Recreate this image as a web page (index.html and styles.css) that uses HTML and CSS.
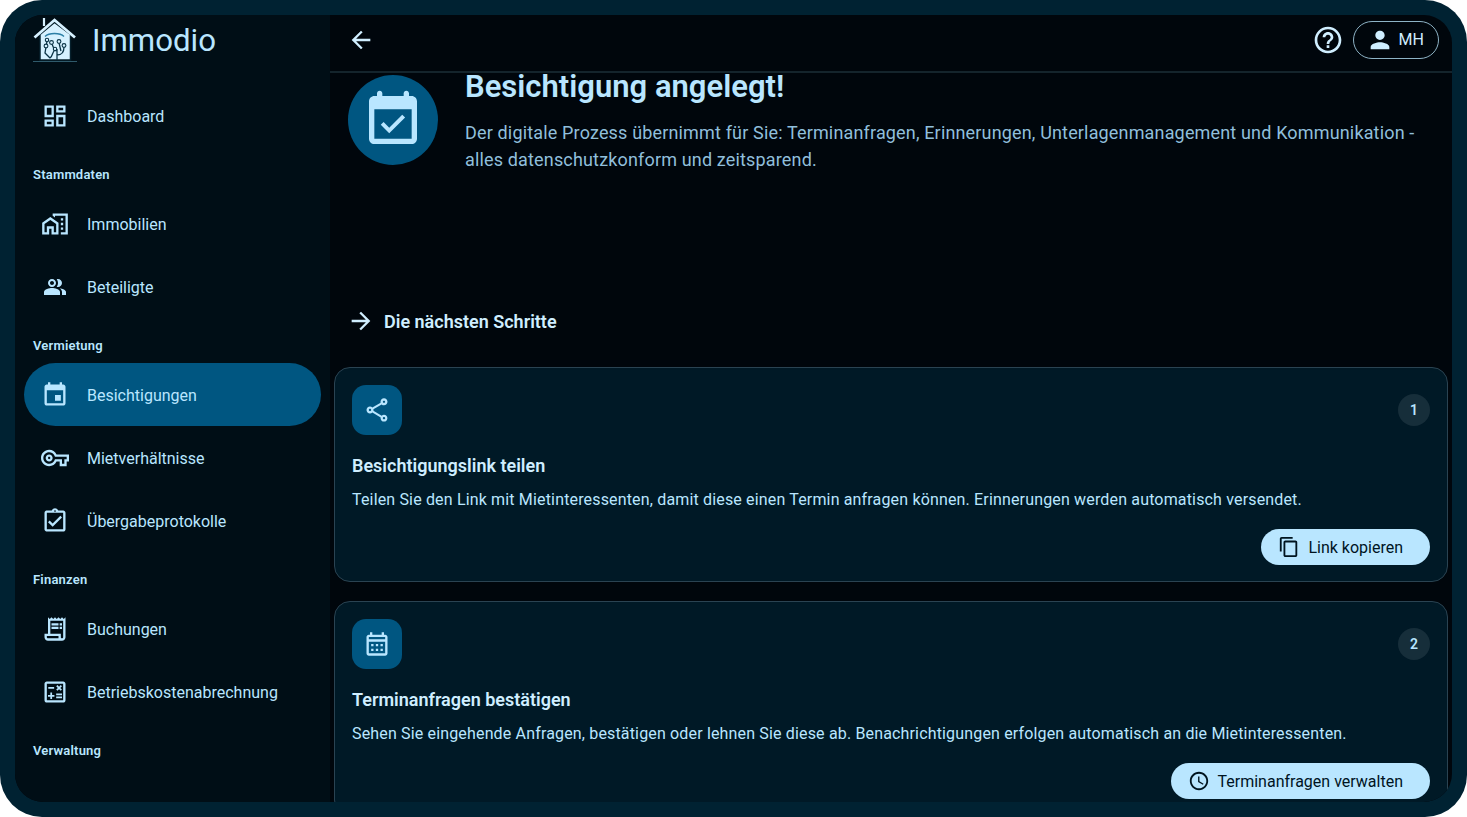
FILE: index.html
```html
<!DOCTYPE html>
<html lang="de">
<head>
<meta charset="utf-8">
<title>Immodio</title>
<link rel="stylesheet" href="styles.css">
</head>
<body>
<div class="frame">
  <div class="app">
    <aside class="sidebar">
      <div class="brand">
        <svg class="logo" viewBox="0 0 46 46" aria-hidden="true">
          <path class="logo-base" d="M1 43.500h44"/>
          <path class="logo-chim" d="M12 0v8"/>
          <path class="logo-body" d="M8 16.500 22.500 4.500 38.500 16.500V42H8z"/>
          <path class="logo-roof" d="M2.500 19.500 22.500 2 43 19.500"/>
          <path class="logo-arc" d="M13 18.500c4-4 15-4 19 0"/>
          <path class="logo-tree" d="M25 42V31M25 37c5 0 7-3 7-8M25 33c-3 0-4-5-5-7M18 40l-5-5 1-6M18 40c3-2 2-6 5-8M29 33c-1-3-1-5-2-8M14 29l1-6"/>
          <g class="logo-nodes"><circle cx="32" cy="27.500" r="1.900"/><circle cx="19.500" cy="24.500" r="1.900"/><circle cx="14" cy="28" r="1.900"/><circle cx="27" cy="23.500" r="1.900"/><circle cx="15" cy="22" r="1.700"/><circle cx="23" cy="31" r="1.700"/></g>
        </svg>
        <span class="brand-name">Immodio</span>
      </div>
      <nav class="nav">
        <a class="nav-item"><span class="nav-ic"><svg class="ic" viewBox="0 0 24 24"><path d="M19 5v2h-4V5h4M9 5v6H5V5h4m10 8v6h-4v-6h4M9 17v2H5v-2h4M21 3h-8v6h8V3zM11 3H3v10h8V3zm10 8h-8v10h8V11zm-10 4H3v6h8v-6z"/></svg></span>Dashboard</a>
        <div class="nav-label">Stammdaten</div>
        <a class="nav-item"><span class="nav-ic"><svg class="ic" viewBox="0 0 24 24"><path d="M1 11v10h6v-5h2v5h6V11L8 6zm12 8h-2v-5H5v5H3v-7l5-3.500 5 3.500zM17 7h2v2h-2zM17 11h2v2h-2zM17 15h2v2h-2zM10 3v1.970l2 1.430V5h9v14h-4v2h6V3z"/></svg></span>Immobilien</a>
        <a class="nav-item"><span class="nav-ic"><svg class="ic ic-sm" viewBox="0 0 24 24"><path d="M16.670 13.130C18.040 14.060 19 15.320 19 17v3h4v-3c0-2.180-3.570-3.470-6.330-3.870z"/><path d="M15 12c2.210 0 4-1.790 4-4s-1.790-4-4-4c-.47 0-.91.1-1.330.24C14.500 5.270 15 6.580 15 8s-.5 2.730-1.330 3.760c.42.14.86.24 1.330.24z"/><path d="M9 12c2.210 0 4-1.790 4-4s-1.790-4-4-4-4 1.790-4 4 1.790 4 4 4zm0-6c1.100 0 2 .9 2 2s-.9 2-2 2-2-.9-2-2 .9-2 2-2z"/><path d="M9 13c-2.670 0-8 1.340-8 4v3h16v-3c0-2.660-5.330-4-8-4z"/></svg></span>Beteiligte</a>
        <div class="nav-label">Vermietung</div>
        <a class="nav-item is-active"><span class="nav-ic"><svg class="ic" viewBox="0 0 24 24"><path d="M17 12h-5v5h5v-5zM16 1v2H8V1H6v2H5c-1.110 0-1.990.9-1.990 2L3 19c0 1.100.89 2 2 2h14c1.100 0 2-.9 2-2V5c0-1.100-.9-2-2-2h-1V1h-2zm3 18H5V8h14v11z"/></svg></span>Besichtigungen</a>
        <a class="nav-item"><span class="nav-ic"><svg class="ic" viewBox="0 0 24 24"><path d="M22 19h-6v-4h-2.680c-1.140 2.420-3.600 4-6.320 4-3.860 0-7-3.140-7-7s3.140-7 7-7c2.720 0 5.170 1.580 6.320 4H24v6h-2v4zm-4-2h2v-4h2v-2H11.940l-.23-.67C11.010 8.340 9.110 7 7 7c-2.760 0-5 2.240-5 5s2.240 5 5 5c2.110 0 4.010-1.340 4.710-3.330l.23-.67H18v4zM7 15c-1.650 0-3-1.350-3-3s1.350-3 3-3 3 1.350 3 3-1.350 3-3 3zm0-4c-.55 0-1 .45-1 1s.45 1 1 1 1-.45 1-1-.45-1-1-1z"/></svg></span>Mietverhältnisse</a>
        <a class="nav-item"><span class="nav-ic"><svg class="ic" viewBox="0 0 24 24"><path d="M18 9l-1.410-1.420L10 14.170l-2.590-2.580L6 13l4 4zm1-6h-4.180C14.400 1.840 13.300 1 12 1c-1.300 0-2.400.84-2.820 2H5c-.14 0-.27.01-.4.04-.39.08-.74.28-1.010.55-.18.18-.33.4-.43.64-.1.23-.16.49-.16.77v14c0 .27.06.54.16.78s.25.45.43.64c.27.27.62.47 1.010.55.13.02.26.03.4.03h14c1.100 0 2-.9 2-2V5c0-1.100-.9-2-2-2zm-7-.25c.41 0 .75.34.75.75s-.34.75-.75.75-.75-.34-.75-.75.34-.75.75-.75zM19 19H5V5h14v14z"/></svg></span>Übergabeprotokolle</a>
        <div class="nav-label">Finanzen</div>
        <a class="nav-item"><span class="nav-ic"><svg class="ic" viewBox="0 0 24 24"><path d="M19.500 3.500L18 2l-1.500 1.500L15 2l-1.500 1.500L12 2l-1.500 1.500L9 2 7.500 3.500 6 2v14H3v3c0 1.660 1.340 3 3 3h12c1.660 0 3-1.340 3-3V2l-1.500 1.500zM15 20H6c-.55 0-1-.45-1-1v-1h10v2zm4-1c0 .55-.45 1-1 1s-1-.45-1-1v-3H8V5h11v14z"/><path d="M9 7h6v2H9zM16 7h2v2h-2zM9 10h6v2H9zM16 10h2v2h-2z"/></svg></span>Buchungen</a>
        <a class="nav-item"><span class="nav-ic"><svg class="ic" viewBox="0 0 24 24"><path d="M19 3H5c-1.100 0-2 .9-2 2v14c0 1.100.9 2 2 2h14c1.100 0 2-.9 2-2V5c0-1.100-.9-2-2-2zm0 16H5V5h14v14z"/><path d="M6.250 7.720h5v1.500h-5zM13 15.750h5v1.500h-5zM13 13.250h5v1.500h-5zM8 18h1.500v-2h2v-1.500h-2v-2H8v2H6V16h2zM14.090 10.950l1.410-1.410 1.410 1.410 1.060-1.060-1.410-1.420 1.410-1.410L16.910 6 15.500 7.410 14.090 6l-1.060 1.060 1.410 1.410-1.410 1.420z"/></svg></span>Betriebskostenabrechnung</a>
        <div class="nav-label">Verwaltung</div>
      </nav>
    </aside>
    <main class="main">
      <header class="topbar">
        <svg class="ic top-back" viewBox="0 0 24 24"><path d="M20 11H7.830l5.590-5.590L12 4l-8 8 8 8 1.410-1.410L7.830 13H20v-2z"/></svg>
        <div class="top-actions">
          <svg class="ic top-help" viewBox="0 0 24 24"><path d="M11 18h2v-2h-2v2zm1-16C6.480 2 2 6.480 2 12s4.480 10 10 10 10-4.480 10-10S17.520 2 12 2zm0 18c-4.410 0-8-3.590-8-8s3.590-8 8-8 8 3.590 8 8-3.590 8-8 8zm0-14c-2.210 0-4 1.790-4 4h2c0-1.100.9-2 2-2s2 .9 2 2c0 2-3 1.750-3 5h2c0-2.250 3-2.500 3-5 0-2.210-1.790-4-4-4z"/></svg>
          <div class="user-chip">
            <svg class="ic" viewBox="0 0 24 24"><path d="M12 12c2.210 0 4-1.790 4-4s-1.790-4-4-4-4 1.790-4 4 1.790 4 4 4zm0 2c-2.670 0-8 1.340-8 4v2h16v-2c0-2.660-5.330-4-8-4z"/></svg>
            <span>MH</span>
          </div>
        </div>
      </header>
      <div class="content">
        <section class="hero">
          <div class="hero-badge">
            <svg class="hero-ic" viewBox="0 0 24 24"><path fill-rule="evenodd" d="M7 1c.55 0 1 .45 1 1v1h8V2c0-.55.45-1 1-1s1 .45 1 1v1h1c1.100 0 2 .9 2 2v14c0 1.100-.9 2-2 2H5c-1.100 0-2-.9-2-2V5c0-1.100.9-2 2-2h1V2c0-.55.45-1 1-1zM5 8v11h14V8z"/><path d="M16.530 11.060 15.470 10l-4.880 4.880-2.120-2.120-1.060 1.060L10.590 17z"/></svg>
          </div>
          <div class="hero-text">
            <h1>Besichtigung angelegt!</h1>
            <p>Der digitale Prozess übernimmt für Sie: Terminanfragen, Erinnerungen, Unterlagenmanagement und Kommunikation - alles datenschutzkonform und zeitsparend.</p>
          </div>
        </section>
        <h2 class="steps-title">
          <svg class="ic" viewBox="0 0 24 24"><path d="M12 4l-1.410 1.410L16.170 11H4v2h12.170l-5.580 5.590L12 20l8-8z"/></svg>
          Die nächsten Schritte
        </h2>
        <article class="card">
          <div class="card-head">
            <span class="card-ic"><svg class="ic" viewBox="0 0 24 24"><path d="M18 16.080c-.76 0-1.440.3-1.960.77L8.910 12.700c.05-.23.09-.46.09-.7s-.04-.47-.09-.7l7.050-4.110c.54.5 1.250.81 2.040.81 1.660 0 3-1.340 3-3s-1.340-3-3-3-3 1.340-3 3c0 .24.04.47.09.7L8.040 9.810C7.500 9.310 6.790 9 6 9c-1.660 0-3 1.340-3 3s1.340 3 3 3c.79 0 1.500-.31 2.040-.81l7.120 4.160c-.05.21-.08.43-.08.65 0 1.610 1.310 2.920 2.920 2.920s2.920-1.310 2.920-2.920-1.310-2.920-2.920-2.920zM18 4c.55 0 1 .45 1 1s-.45 1-1 1-1-.45-1-1 .45-1 1-1zM6 13c-.55 0-1-.45-1-1s.45-1 1-1 1 .45 1 1-.45 1-1 1zm12 7.020c-.55 0-1-.45-1-1s.45-1 1-1 1 .45 1 1-.45 1-1 1z"/></svg></span>
            <span class="card-num">1</span>
          </div>
          <h3>Besichtigungslink teilen</h3>
          <p>Teilen Sie den Link mit Mietinteressenten, damit diese einen Termin anfragen können. Erinnerungen werden automatisch versendet.</p>
          <div class="card-foot">
            <button class="btn"><svg class="ic" viewBox="0 0 24 24"><path d="M16 1H4c-1.100 0-2 .9-2 2v14h2V3h12V1zm3 4H8c-1.100 0-2 .9-2 2v14c0 1.100.9 2 2 2h11c1.100 0 2-.9 2-2V7c0-1.100-.9-2-2-2zm0 16H8V7h11v14z"/></svg>Link kopieren</button>
          </div>
        </article>
        <article class="card">
          <div class="card-head">
            <span class="card-ic"><svg class="ic" viewBox="0 0 24 24"><path d="M19 4h-1V2h-2v2H8V2H6v2H5c-1.100 0-2 .9-2 2v14c0 1.100.9 2 2 2h14c1.100 0 2-.9 2-2V6c0-1.100-.9-2-2-2zm0 16H5V10h14v10zm0-12H5V6h14v2z"/><path d="M7 12h2v2H7zM11 12h2v2h-2zM15 12h2v2h-2zM7 16h2v2H7zM11 16h2v2h-2zM15 16h2v2h-2z"/></svg></span>
            <span class="card-num">2</span>
          </div>
          <h3>Terminanfragen bestätigen</h3>
          <p>Sehen Sie eingehende Anfragen, bestätigen oder lehnen Sie diese ab. Benachrichtigungen erfolgen automatisch an die Mietinteressenten.</p>
          <div class="card-foot">
            <button class="btn"><svg class="ic ic-clock" viewBox="0 0 24 24"><path d="M11.990 2C6.470 2 2 6.480 2 12s4.470 10 9.990 10C17.520 22 22 17.520 22 12S17.520 2 11.990 2zM12 20c-4.420 0-8-3.580-8-8s3.580-8 8-8 8 3.580 8 8-3.580 8-8 8zm.5-13H11v6l5.250 3.150.75-1.230-4.500-2.670z"/></svg>Terminanfragen verwalten</button>
          </div>
        </article>
      </div>
    </main>
  </div>
</div>
</body>
</html>
```
FILE: styles.css
```css
* { box-sizing: border-box; }
html, body { height: 100%; }
body {
  margin: 0;
  background: #fff;
  font-family: Roboto, "Liberation Sans", sans-serif;
  color: #b9e6ff;
  overflow: hidden;
}
.frame {
  height: 817px;
  padding: 15px;
  background: #002232;
  border-radius: 42px;
}
.app {
  display: flex;
  height: 787px;
  border-radius: 28px;
  overflow: hidden;
  background: #00060c;
}
.ic { width: 28px; height: 28px; fill: currentColor; flex: none; display: block; }

/* sidebar */
.sidebar {
  width: 315px;
  flex: none;
  background: #000e16;
  overflow: hidden;
}
.brand {
  display: flex;
  align-items: flex-start;
  gap: 14px;
  height: 69.3px;
  padding: 3px 0 0 17px;
}
.logo { width: 46px; height: 46px; flex: none; }
.logo-base { stroke: #2f5a6b; stroke-width: 1.2; fill: none; }
.logo-chim { stroke: #d6f1ff; stroke-width: 2.2; fill: none; }
.logo-body { fill: #d6f1ff; stroke: #06202c; stroke-width: 1.5; }
.logo-roof { fill: none; stroke: #d6f1ff; stroke-width: 2.8; }
.logo-arc { fill: none; stroke: #2b7fa6; stroke-width: 1.4; }
.logo-tree { fill: none; stroke: #0a3346; stroke-width: 1.3; }
.logo-nodes circle { fill: #d6f1ff; stroke: #0a3346; stroke-width: 1.1; }
.brand-name { font-size: 31.2px; font-weight: 400; line-height: 31px; color: #b9e6ff; margin-top: 7px; }
.nav { display: flex; flex-direction: column; padding: 0 9px; }
.nav-item {
  display: flex;
  align-items: center;
  height: 63px;
  flex: none;
  padding: 1px 0 0 17px;
  border-radius: 32px;
  font-size: 16px;
}
.nav-ic { width: 28px; height: 28px; margin-right: 18px; display: flex; align-items: center; justify-content: center; flex: none; }
.ic-sm { width: 24px; height: 24px; }
.nav-item.is-active { background: #005681; }
.nav-label {
  height: 45px;
  flex: none;
  padding: 19px 0 0 9px;
  font-size: 13px;
  line-height: 17px;
  font-weight: 600;
  letter-spacing: .2px;
}

/* main */
.main { flex: 1; min-width: 0; display: flex; flex-direction: column; overflow: hidden; }
.topbar {
  display: flex;
  align-items: center;
  justify-content: space-between;
  height: 58px;
  flex: none;
  padding: 0 13px 7px 17px;
  border-bottom: 2px solid #14242c;
  color: #cfeeff;
}
.top-actions { display: flex; align-items: center; gap: 9px; }
.top-help { width: 32px; height: 32px; }
.user-chip {
  display: flex;
  align-items: center;
  gap: 5px;
  height: 38px;
  padding: 0 14px 0 12px;
  border: 1.500px solid #8db3c6;
  border-radius: 19px;
  font-size: 16px;
}
.content { flex: 1; min-height: 0; padding: 2px 4px 0 4px; }
.hero { display: flex; gap: 27px; padding-left: 14px; height: 232px; }
.hero-badge {
  width: 90px;
  height: 90px;
  flex: none;
  border-radius: 50%;
  background: #005681;
  display: flex;
  align-items: center;
  justify-content: center;
}
.hero-ic { width: 64px; height: 64px; fill: #b9e6ff; }
.hero-text h1 { margin: 0; font-size: 31px; line-height: 24px; font-weight: 600; color: #b9e6ff; }
.hero-text p { margin: 20px 0 0; font-size: 18px; line-height: 27px; letter-spacing: .16px; color: #90bfdb; max-width: 970px; }
.steps-title {
  display: flex;
  align-items: center;
  gap: 9px;
  margin: 0 0 32px;
  padding-left: 13px;
  height: 28px;
  font-size: 18px;
  font-weight: 600;
  color: #cfeeff;
}
.card {
  background: #001926;
  border: 1px solid #2a4352;
  border-radius: 16px;
  padding: 17px 17px 16px;
  margin-bottom: 19px;
  height: 215px;
}
.card-head { display: flex; align-items: center; justify-content: space-between; height: 50px; }
.card-ic {
  width: 50px;
  height: 50px;
  border-radius: 14px;
  background: #005681;
  display: flex;
  align-items: center;
  justify-content: center;
}
.card-num {
  width: 32px;
  height: 32px;
  border-radius: 50%;
  background: #162e3a;
  display: flex;
  align-items: center;
  justify-content: center;
  font-size: 14px;
  font-weight: 600;
}
.card h3 { margin: 19px 0 0; font-size: 18px; line-height: 24px; font-weight: 600; color: #cfeeff; }
.card p { margin: 10px 0 0; font-size: 16px; line-height: 24px; letter-spacing: .16px; color: #b9e6ff; }
.card-foot { display: flex; justify-content: flex-end; margin-top: 17px; }
.btn {
  display: flex;
  align-items: center;
  gap: 8px;
  height: 36px;
  padding: 0 27px 0 17px;
  border: 0;
  border-radius: 18px;
  background: #b9e6ff;
  color: #00141f;
  font: 400 16px Roboto, "Liberation Sans", sans-serif;
}
.btn .ic { width: 22px; height: 22px; }
```
